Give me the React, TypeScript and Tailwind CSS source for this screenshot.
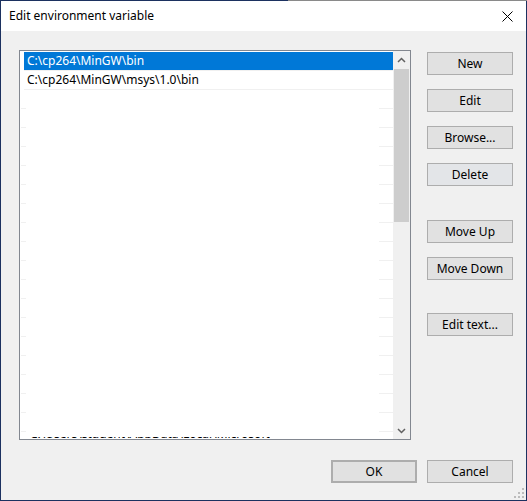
import React from "react";

const font = { fontFamily: '"Segoe UI", "Noto Sans", "Open Sans", sans-serif' };

function Btn({ label, className = "" }: { label: string; className?: string }) {
  return (
    <div
      className={`w-[86px] h-[23px] flex items-center justify-center text-[12px] text-black bg-[#e1e1e1] border border-[#adadad] ${className}`}
    >
      {label}
    </div>
  );
}

function EmptyRow() {
  return (
    <div className="h-[19px] flex items-end justify-between shrink-0">
      <div className="w-[5px] h-px bg-[#f0f0f0] ml-[1px]" />
      <div className="w-[14px] h-px bg-[#f0f0f0]" />
    </div>
  );
}

export default function App() {
  const empties = Array.from({ length: 18 });
  return (
    <div className="w-[527px] h-[501px] bg-white relative overflow-hidden" style={font}>
      {/* top edge */}
      <div className="flex h-px">
        <div className="w-[288px] bg-[#1c3160]" />
        <div className="flex-1 bg-[#8a8a8a]" />
      </div>
      <div className="h-[500px] flex flex-col border-l border-r border-b border-[#1c3160]">
        {/* title bar */}
        <div className="h-[30px] bg-white flex items-center justify-between pl-[8px] pr-[13px] shrink-0">
          <span className="text-[12px] text-black">Edit environment variable</span>
          <svg width="11" height="11" viewBox="0 0 11 11">
            <path d="M0.5 0.5 L10.5 10.5 M10.5 0.5 L0.5 10.5" stroke="#000" strokeWidth="1" />
          </svg>
        </div>
        {/* body */}
        <div className="flex-1 bg-[#f0f0f0] flex flex-col pl-[18px] pt-[19px] relative">
          <div className="flex">
            {/* listbox */}
            <div className="w-[392px] h-[390px] border border-[#828790] bg-white flex overflow-hidden">
              <div className="flex-1 flex flex-col overflow-hidden relative">
                <div className="pl-[4px] pt-[1px]">
                  <div className="h-[18px] bg-[#0078d7] text-white text-[12px] flex items-center pl-[3px] leading-none">
                    C:\cp264\MinGW\bin
                  </div>
                  <div className="h-px bg-[#f0f0f0]" />
                  <div className="h-[18px] text-black text-[12px] flex items-center pl-[3px] leading-none">
                    C:\cp264\MinGW\msys\1.0\bin
                  </div>
                  <div className="h-px bg-[#f0f0f0]" />
                </div>
                {empties.map((_, i) => (
                  <EmptyRow key={i} />
                ))}
                <div className="absolute left-[10px] bottom-[1px] h-[1px] w-[240px] overflow-hidden">
                  <div className="text-[12px] leading-[14px] text-black whitespace-nowrap -mt-[10px]">
                    C:\Users\student\AppData\Local\Microsoft\WindowsApps
                  </div>
                </div>
              </div>
              {/* scrollbar */}
              <div className="w-[17px] bg-[#f0f0f0] flex flex-col shrink-0">
                <div className="h-[17px] flex items-center justify-center">
                  <svg width="9" height="6" viewBox="0 0 9 6">
                    <path d="M1 5 L4.5 1.5 L8 5" stroke="#606060" strokeWidth="1.5" fill="none" />
                  </svg>
                </div>
                <div className="mx-[1px] mt-[1px] h-[153px] bg-[#cdcdcd]" />
                <div className="flex-1" />
                <div className="h-[17px] flex items-center justify-center">
                  <svg width="9" height="6" viewBox="0 0 9 6">
                    <path d="M1 1 L4.5 4.5 L8 1" stroke="#606060" strokeWidth="1.5" fill="none" />
                  </svg>
                </div>
              </div>
            </div>
            {/* right buttons */}
            <div className="flex flex-col ml-[16px] pt-[2px]">
              <Btn label="New" />
              <Btn label="Edit" className="mt-[14px]" />
              <Btn label="Browse..." className="mt-[14px]" />
              <Btn label="Delete" className="mt-[14px] border-[#7a94b4] bg-[#e3e5e8]" />
              <Btn label="Move Up" className="mt-[34px]" />
              <Btn label="Move Down" className="mt-[14px]" />
              <Btn label="Edit text..." className="mt-[33px]" />
            </div>
          </div>
          {/* bottom buttons */}
          <div className="flex justify-end pr-[13px] mt-[20px] gap-[10px]">
            <Btn label="OK" className="border-2 border-[#0078d7]" />
            <Btn label="Cancel" />
          </div>
          {/* size grip */}
          <div className="absolute right-[1px] bottom-[1px]">
            <svg width="11" height="11" viewBox="0 0 11 11">
              {[
                [8, 0],
                [8, 4],
                [4, 4],
                [8, 8],
                [4, 8],
                [0, 8],
              ].map(([x, y], i) => (
                <rect key={i} x={x} y={y} width="2" height="2" fill="#bcbcbc" />
              ))}
            </svg>
          </div>
        </div>
      </div>
    </div>
  );
}
